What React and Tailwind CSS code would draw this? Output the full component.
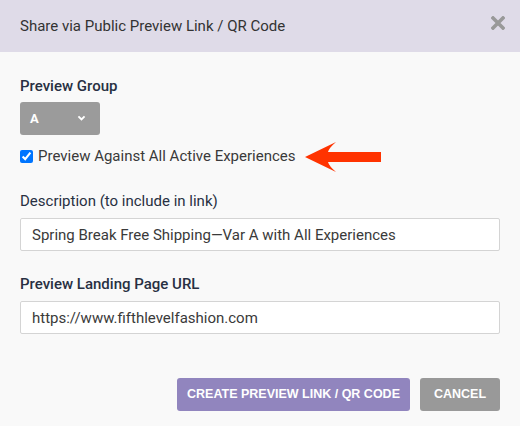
import React from 'react';

const Label = ({ children, className = '' }) => (
  <div className={`text-[15px] leading-5 font-medium text-[#283042] ${className}`}>{children}</div>
);

const TextField = ({ value, className = '' }) => (
  <input
    type="text"
    defaultValue={value}
    className={`block w-full h-[33px] px-[11px] bg-white border border-[#d4d4d4] rounded-[2px] text-[15px] text-[#3a3a3a] outline-none ${className}`}
  />
);

const App = () => {
  return (
    <div className="w-[520px] h-[426px] bg-[#f9f9f9] font-['Roboto',sans-serif] overflow-hidden">
      {/* Header */}
      <div className="h-[52px] bg-[#dfdbe8] flex items-center justify-between pl-5 pr-[15px]">
        <h2 className="text-[15px] text-[#333]">Share via Public Preview Link / QR Code</h2>
        <button className="w-[14px] h-[14px] -mt-[7px]" aria-label="Close">
          <svg viewBox="0 0 14 14" width="14" height="14">
            <path d="M2 2 L12 12 M12 2 L2 12" stroke="#999" strokeWidth="3.6" strokeLinecap="square" />
          </svg>
        </button>
      </div>

      {/* Body */}
      <div className="px-5 pt-6">
        <Label>Preview Group</Label>
        <div className="mt-[6px] w-[80px] h-[33px] bg-[#9b9b9b] rounded-[3px] flex items-center justify-between pl-[10px] pr-[14px]">
          <span className="text-[13px] font-bold text-white">A</span>
          <svg viewBox="0 0 10 8" width="9" height="7">
            <path d="M1.5 1.5 L5 5 L8.5 1.5" fill="none" stroke="#fff" strokeWidth="2.2" />
          </svg>
        </div>

        <div className="mt-[11px] h-5 flex items-center">
          <input type="checkbox" defaultChecked className="w-[13px] h-[13px] m-0" />
          <span className="ml-[5px] text-[15px] text-[#3a3a3a]">Preview Against All Active Experiences</span>
          <svg className="ml-[9px] mt-[2px]" viewBox="0 0 76 30" width="76" height="30">
            <path d="M0 15 L31 0 Q24 6 23 10 L76 10 L76 20 L23 20 Q24 24 31 30 Z" fill="#ff3300" />
          </svg>
        </div>

        <Label className="mt-[25px] font-normal text-[#2f3544]">Description (to include in link)</Label>
        <TextField className="mt-[7px]" value="Spring Break Free Shipping—Var A with All Experiences" />

        <Label className="mt-[23px]">Preview Landing Page URL</Label>
        <TextField className="mt-[7px]" value="https://www.fifthlevelfashion.com" />

        <div className="mt-[44px] flex justify-end gap-[10px] font-['Liberation_Sans',Arial,sans-serif]">
          <button className="w-[233px] h-[33px] bg-[#9185be] rounded-[3px] text-white text-[12.5px] font-bold uppercase">
            Create Preview Link / QR Code
          </button>
          <button className="w-[80px] h-[33px] bg-[#999] rounded-[3px] text-white text-[12.5px] font-bold uppercase">
            Cancel
          </button>
        </div>
      </div>
    </div>
  );
};

export default App;
